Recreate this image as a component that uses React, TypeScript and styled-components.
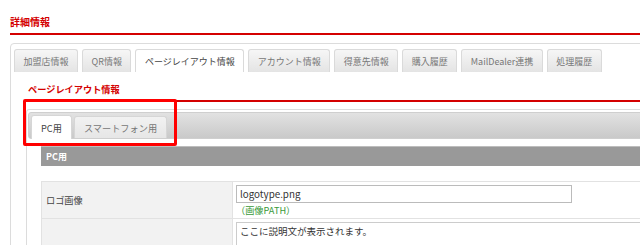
import styled, { createGlobalStyle } from 'styled-components';

const GlobalStyle = createGlobalStyle`
  html, body {
    margin: 0;
    padding: 0;
    background: #fff;
    overflow: hidden;
  }
  body {
    font-family: "Noto Sans CJK JP", "Noto Sans", sans-serif;
    color: #333;
  }
`;

const mainTabs = [
  '加盟店情報',
  'QR情報',
  'ページレイアウト情報',
  'アカウント情報',
  '得意先情報',
  '購入履歴',
  'MailDealer連携',
  '処理履歴',
];

export default function App() {
  return (
    <>
      <GlobalStyle />
      <Page>
        <Title>詳細情報</Title>
        <Panel>
          <TabBar>
            {mainTabs.map((t) => (
              <Tab key={t} $active={t === 'ページレイアウト情報'}>
                {t}
              </Tab>
            ))}
          </TabBar>
          <PanelBody>
            <SubTitle>ページレイアウト情報</SubTitle>
            <SubPanel>
              <SubNav>
                <SubTab $active>PC用</SubTab>
                <SubTab>スマートフォン用</SubTab>
              </SubNav>
              <SubBody>
                <SectionBar>PC用</SectionBar>
                <FormTable>
                  <tbody>
                    <tr>
                      <Label $height={36}>ロゴ画像</Label>
                      <Value>
                        <TextInput defaultValue="logotype.png" readOnly />
                        <Note>（画像PATH）</Note>
                      </Value>
                    </tr>
                    <tr>
                      <Label $height={60} />
                      <Value>
                        <TextArea defaultValue="ここに説明文が表示されます。" readOnly />
                      </Value>
                    </tr>
                  </tbody>
                </FormTable>
              </SubBody>
            </SubPanel>
            <Highlight />
          </PanelBody>
        </Panel>
      </Page>
    </>
  );
}

const Page = styled.div`
  width: 700px;
  padding: 15px 0 0 10px;
`;

const Title = styled.h2`
  margin: 0;
  padding-bottom: 4px;
  font-size: 10px;
  line-height: 14px;
  font-weight: bold;
  color: #d40000;
  border-bottom: 2px solid #d40000;
`;

const Panel = styled.div`
  margin-top: 8px;
  border: 1px solid #dcdcdc;
  border-radius: 4px;
  padding: 5px 0 0 3px;
  min-height: 260px;
`;

const TabBar = styled.div`
  display: flex;
  gap: 4px;
`;

const Tab = styled.div<{ $active?: boolean }>`
  height: 23px;
  padding: 0 8.5px;
  display: flex;
  align-items: center;
  font-size: 9px;
  color: ${(p) => (p.$active ? '#444' : '#777')};
  border: 1px solid #dadada;
  border-bottom: none;
  border-radius: 3px 3px 0 0;
  background: ${(p) =>
    p.$active ? '#fff' : 'linear-gradient(#f6f6f6, #e4e4e4)'};
  box-sizing: border-box;
`;

const PanelBody = styled.div`
  position: relative;
  padding-left: 12px;
`;

const SubTitle = styled.h3`
  margin: 0;
  padding: 10px 0 4px 2px;
  font-size: 9.2px;
  line-height: 14px;
  font-weight: bold;
  color: #d40000;
  border-bottom: 2px solid #d40000;
`;

const SubPanel = styled.div`
  margin-top: 7px;
  border: 1px solid #dcdcdc;
  border-radius: 3px;
  padding: 2px 0 0 1px;
  min-height: 200px;
`;

const SubNav = styled.div`
  display: flex;
  gap: 2px;
  padding: 2px 0 0 2px;
  border: 1px solid #cfcfcf;
  border-radius: 3px;
  background: linear-gradient(#e2e2e2, #c9c9c9);
  box-sizing: border-box;
  height: 27px;
`;

const SubTab = styled.div<{ $active?: boolean }>`
  height: ${(p) => (p.$active ? '24px' : '22px')};
  margin-top: ${(p) => (p.$active ? '0' : '1px')};
  padding: 0 ${(p) => (p.$active ? '9px' : '9px')};
  display: flex;
  align-items: center;
  font-size: 9.2px;
  color: ${(p) => (p.$active ? '#444' : '#777')};
  border: 1px solid #d6d6d6;
  border-bottom: none;
  border-radius: 3px 3px 0 0;
  background: ${(p) =>
    p.$active ? '#fff' : 'linear-gradient(#f2f2f2, #e6e6e6)'};
  box-sizing: border-box;
`;

const SubBody = styled.div`
  padding: 7px 0 0 13px;
`;

const SectionBar = styled.div`
  height: 20px;
  box-sizing: border-box;
  border-top: 1px solid #bdbdbd;
  background: #999;
  color: #fff;
  font-size: 9px;
  font-weight: bold;
  line-height: 19px;
  padding-left: 5px;
`;

const FormTable = styled.table`
  margin-top: 15px;
  width: 100%;
  border-collapse: collapse;
`;

const Label = styled.th<{ $height: number }>`
  width: 191px;
  height: ${(p) => p.$height}px;
  padding: 0 0 0 4px;
  box-sizing: border-box;
  border: 1px solid #e2e2e2;
  background: #f2f2f2;
  text-align: left;
  font-size: 9.2px;
  font-weight: normal;
  color: #444;
`;

const Value = styled.td`
  padding: 3px 0 0 3px;
  vertical-align: top;
  border: 1px solid #e2e2e2;
`;

const TextInput = styled.input`
  display: block;
  width: 336px;
  height: 18px;
  box-sizing: border-box;
  border: 1px solid #bbb;
  padding: 0 3px;
  font-family: inherit;
  font-size: 9.8px;
  color: #333;
  outline: none;
`;

const Note = styled.div`
  font-size: 9.2px;
  line-height: 15px;
  color: #3a9a3a;
`;

const TextArea = styled.textarea`
  display: block;
  width: 100%;
  height: 50px;
  box-sizing: border-box;
  border: 1px solid #ccc;
  padding: 1px 3px;
  resize: none;
  font-family: inherit;
  font-size: 9.5px;
  line-height: 14px;
  color: #333;
  outline: none;
`;

const Highlight = styled.div`
  position: absolute;
  left: 9px;
  top: 27px;
  width: 154px;
  height: 47px;
  box-sizing: border-box;
  border: 3px solid #f00;
  border-radius: 2px;
  pointer-events: none;
`;
